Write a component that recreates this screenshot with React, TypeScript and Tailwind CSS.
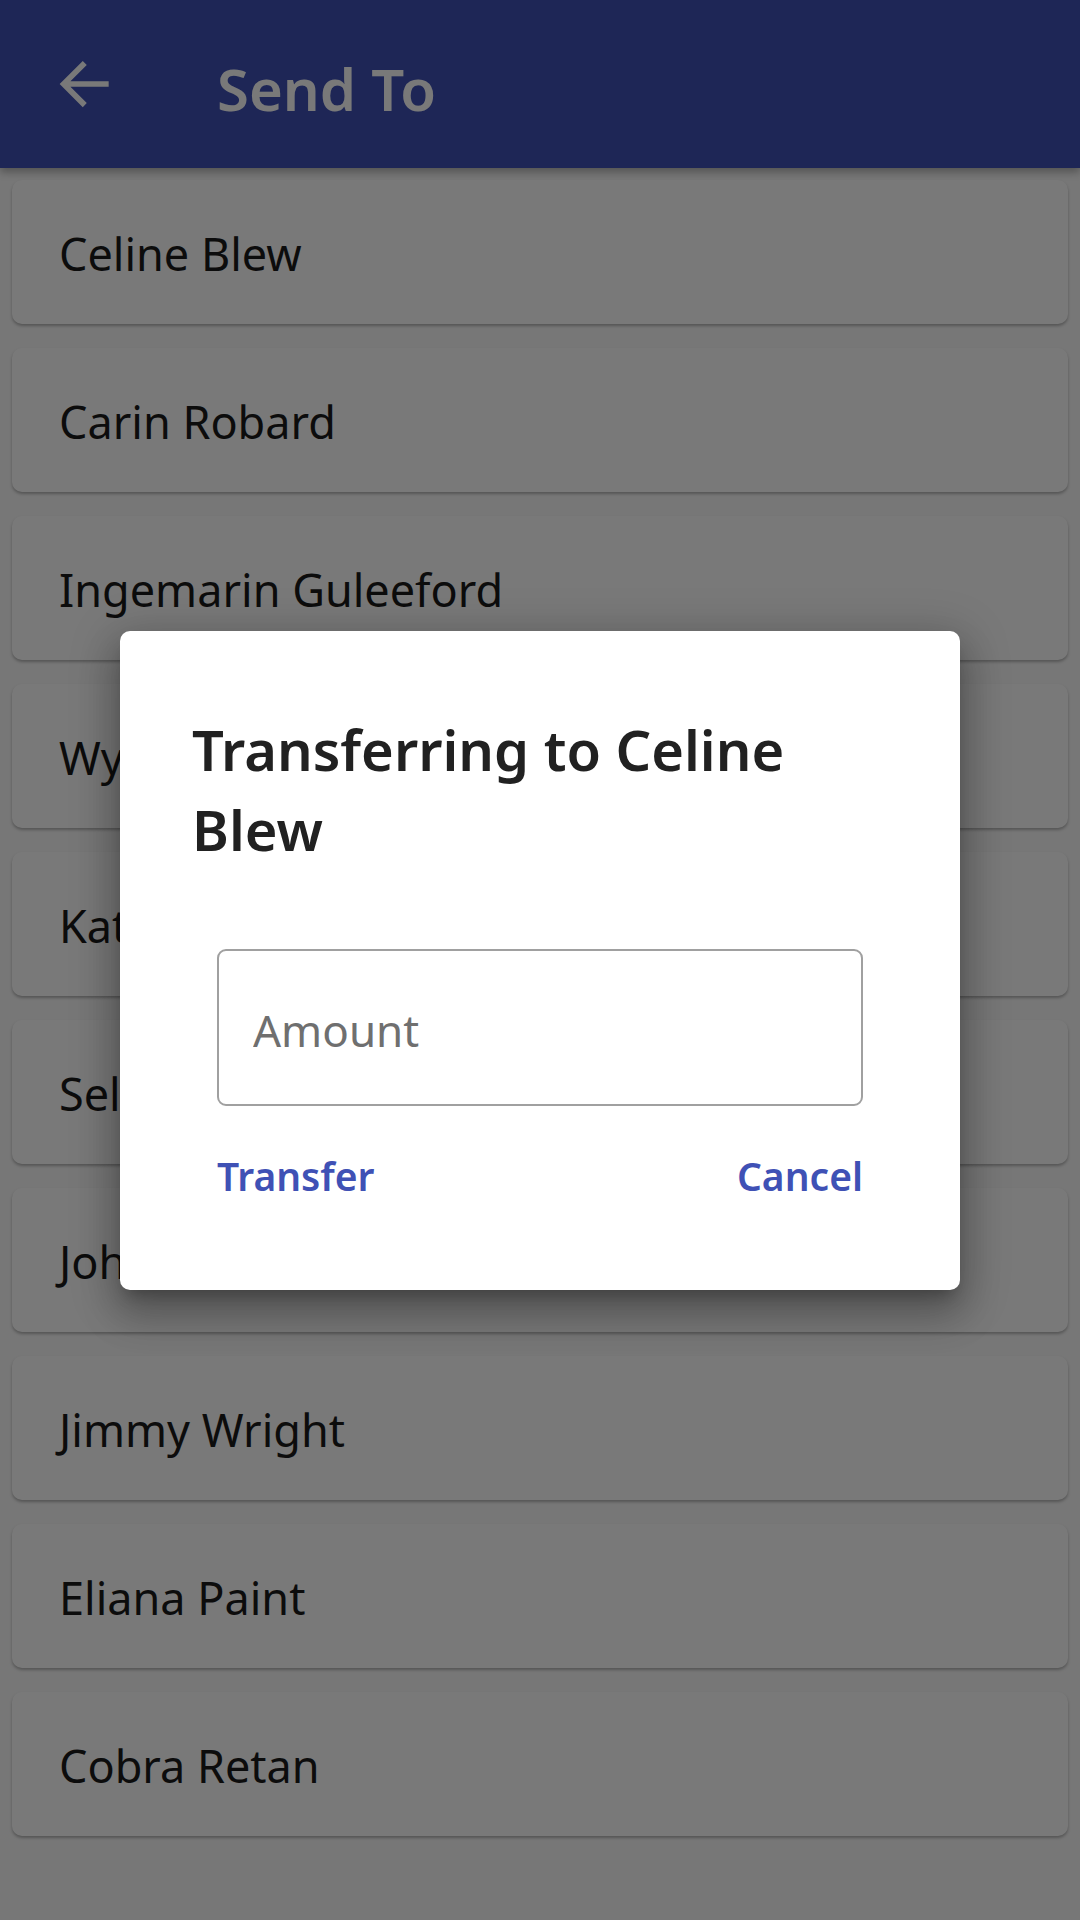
import React from "react";

const names = [
  "Celine Blew",
  "Carin Robard",
  "Ingemarin Guleeford",
  "Wyatt Morrow",
  "Katrina Bell",
  "Selma Hardy",
  "John Carver",
  "Jimmy Wright",
  "Eliana Paint",
  "Cobra Retan",
];

export default function App() {
  return (
    <div className="relative w-[1080px] h-[1920px] overflow-hidden bg-[#fafafa] font-['Noto_Sans',sans-serif]">
      <header className="relative z-10 h-[168px] bg-[#3f51b5] flex items-center shadow-[0_4px_8px_rgba(0,0,0,0.3)]">
        <svg
          className="ml-[47px] w-[74px] h-[74px] fill-white"
          viewBox="0 0 24 24"
        >
          <path d="M20 11.1H7.6l5.3-5.3L11.6 4.5 4.1 12l7.5 7.5 1.3-1.3-5.3-5.3H20z" />
        </svg>
        <h1 className="ml-[96px] mt-[9px] text-[58px] font-semibold text-white leading-none">
          Send To
        </h1>
      </header>
      <div className="flex flex-col gap-[24px] px-[12px] pt-[12px]">
        {names.map((n) => (
          <div
            key={n}
            className="h-[144px] rounded-[10px] bg-white flex items-center pl-[47px] pt-[4px] text-[45px] text-[#1a1a1a] shadow-[0_2px_3px_rgba(0,0,0,0.28)]"
          >
            {n}
          </div>
        ))}
      </div>
      <div className="absolute inset-0 z-20 bg-black/[0.525] flex items-center justify-center">
        <div className="w-[840px] rounded-[10px] bg-white pt-[78px] pb-[90px] pl-[72px] pr-[72px] shadow-[0_24px_38px_3px_rgba(0,0,0,0.2),0_9px_46px_8px_rgba(0,0,0,0.18),0_11px_15px_-7px_rgba(0,0,0,0.25)]">
          <h2 className="pr-[10px] text-[56px] leading-[80px] font-semibold text-[#212121]">
            Transferring to Celine Blew
          </h2>
          <div className="mx-[25px] mt-[80px]">
            <input
              className="block w-full h-[157px] rounded-[9px] border-[2.5px] border-[#a0a0a0] pl-[34px] pt-[6px] text-[44px] text-[#212121] placeholder:text-[#6f6f6f] outline-none"
              placeholder="Amount"
            />
            <div className="mt-[46px] flex justify-between text-[39px] leading-[48px] font-semibold text-[#3f51b5]">
              <button>Transfer</button>
              <button>Cancel</button>
            </div>
          </div>
        </div>
      </div>
    </div>
  );
}
